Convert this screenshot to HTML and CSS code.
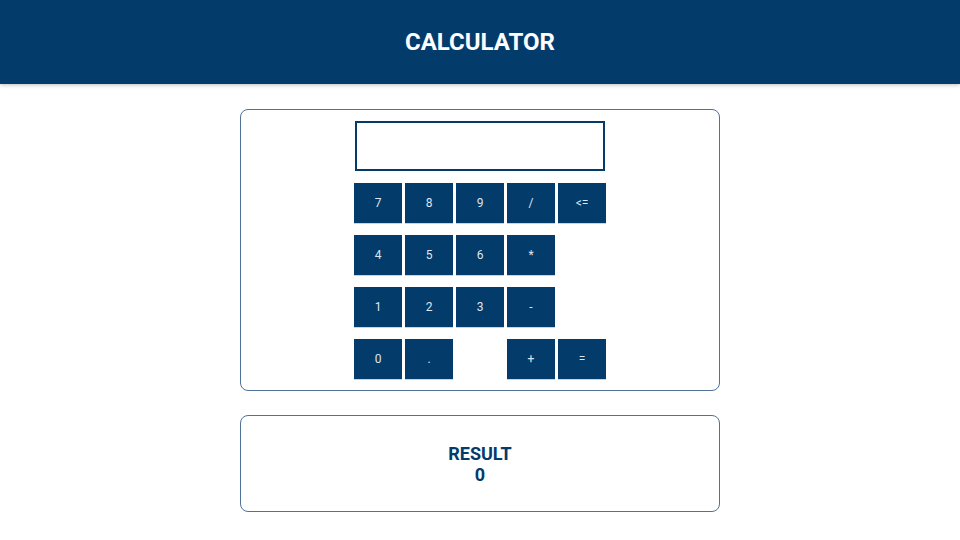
FILE: index.html
```html
<!DOCTYPE html>
<html>
<head>
<meta charset="utf-8">
<link rel="stylesheet" href="styles.css">
</head>
<body>
<header class="topbar"><h1 class="title">CALCULATOR</h1></header>
<main class="main">
  <section class="card calc">
    <div class="display"></div>
    <div class="keys">
      <div class="row">
        <button class="key">7</button><button class="key">8</button><button class="key">9</button><button class="key">/</button><button class="key">&lt;=</button>
      </div>
      <div class="row">
        <button class="key">4</button><button class="key">5</button><button class="key">6</button><button class="key">*</button><span class="blank"></span>
      </div>
      <div class="row">
        <button class="key">1</button><button class="key">2</button><button class="key">3</button><button class="key">-</button><span class="blank"></span>
      </div>
      <div class="row">
        <button class="key">0</button><button class="key">.</button><span class="blank"></span><button class="key">+</button><button class="key">=</button>
      </div>
    </div>
  </section>
  <section class="card result">
    <div class="result-label">RESULT</div>
    <div class="result-value">0</div>
  </section>
</main>
</body>
</html>
```
FILE: styles.css
```css
* { box-sizing: border-box; }
html, body { margin: 0; padding: 0; background: #fff; }
body { font-family: Roboto, "Liberation Sans", sans-serif; }

.topbar {
  height: 84px;
  background: #033b6b;
  display: flex;
  align-items: center;
  justify-content: center;
  box-shadow: 0 1px 4px rgba(0,0,0,0.25);
}
.title {
  margin: 0;
  color: #fff;
  font-size: 24px;
  font-weight: 700;
  letter-spacing: 0;
}

.main {
  display: flex;
  flex-direction: column;
  align-items: center;
  padding-top: 25px;
  gap: 24px;
}

.card {
  width: 480px;
  border: 1px solid #4f7299;
  border-radius: 8px;
  background: #fff;
}

.calc {
  display: flex;
  flex-direction: column;
  align-items: center;
  padding: 11px 0 11px;
  gap: 12px;
}

.display {
  width: 250px;
  height: 50px;
  border: 2px solid #033b6b;
}

.keys {
  display: flex;
  flex-direction: column;
  gap: 12px;
}
.row {
  display: flex;
  gap: 3px;
}
.key, .blank {
  width: 48px;
  height: 40px;
}
.key {
  border: 0;
  padding: 0;
  margin: 0;
  background: #033b6b;
  color: #dfe6ee;
  font-family: Roboto, "Liberation Sans", sans-serif;
  font-size: 12px;
  box-shadow: 0 1px 0 #c9d3de;
}

.result {
  height: 97px;
  display: flex;
  flex-direction: column;
  align-items: center;
  justify-content: center;
  color: #033b6b;
  font-weight: 700;
  font-size: 18px;
  line-height: 21px;
}
```
